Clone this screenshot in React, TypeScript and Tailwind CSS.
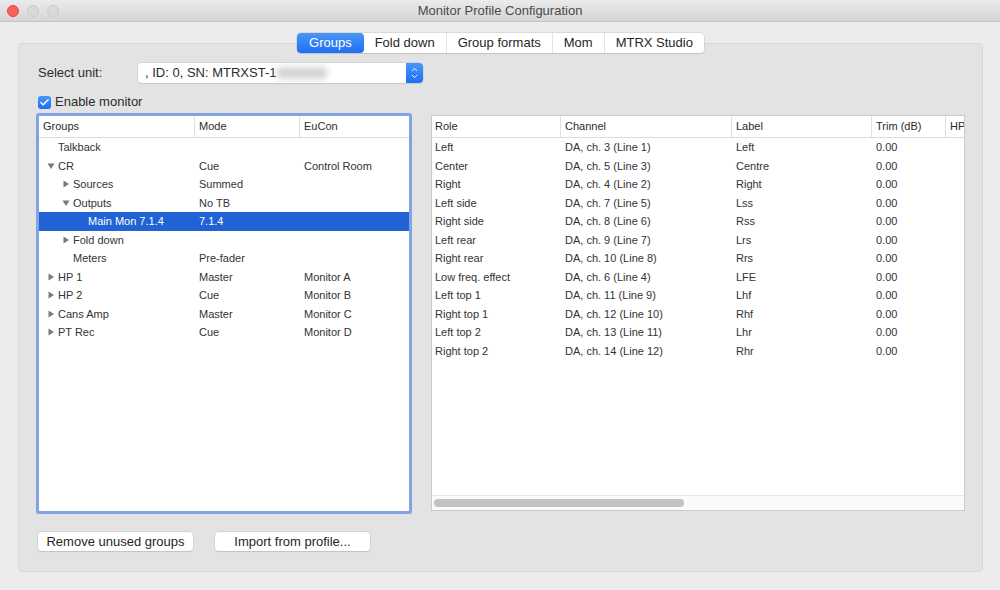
import { Check, ChevronUp, ChevronDown } from "lucide-react";

type TreeRow = {
  name: string;
  mode?: string;
  eucon?: string;
  depth: number;
  arrow?: "open" | "closed";
  selected?: boolean;
};

const treeRows: TreeRow[] = [
  { name: "Talkback", depth: 0 },
  { name: "CR", mode: "Cue", eucon: "Control Room", depth: 0, arrow: "open" },
  { name: "Sources", mode: "Summed", depth: 1, arrow: "closed" },
  { name: "Outputs", mode: "No TB", depth: 1, arrow: "open" },
  { name: "Main Mon 7.1.4", mode: "7.1.4", depth: 2, selected: true },
  { name: "Fold down", depth: 1, arrow: "closed" },
  { name: "Meters", mode: "Pre-fader", depth: 1 },
  { name: "HP 1", mode: "Master", eucon: "Monitor A", depth: 0, arrow: "closed" },
  { name: "HP 2", mode: "Cue", eucon: "Monitor B", depth: 0, arrow: "closed" },
  { name: "Cans Amp", mode: "Master", eucon: "Monitor C", depth: 0, arrow: "closed" },
  { name: "PT Rec", mode: "Cue", eucon: "Monitor D", depth: 0, arrow: "closed" },
];

const channels = [
  ["Left", "DA, ch. 3 (Line 1)", "Left"],
  ["Center", "DA, ch. 5 (Line 3)", "Centre"],
  ["Right", "DA, ch. 4 (Line 2)", "Right"],
  ["Left side", "DA, ch. 7 (Line 5)", "Lss"],
  ["Right side", "DA, ch. 8 (Line 6)", "Rss"],
  ["Left rear", "DA, ch. 9 (Line 7)", "Lrs"],
  ["Right rear", "DA, ch. 10 (Line 8)", "Rrs"],
  ["Low freq. effect", "DA, ch. 6 (Line 4)", "LFE"],
  ["Left top 1", "DA, ch. 11 (Line 9)", "Lhf"],
  ["Right top 1", "DA, ch. 12 (Line 10)", "Rhf"],
  ["Left top 2", "DA, ch. 13 (Line 11)", "Lhr"],
  ["Right top 2", "DA, ch. 14 (Line 12)", "Rhr"],
];

const tabs = ["Groups", "Fold down", "Group formats", "Mom", "MTRX Studio"];

function Arrow({ dir }: { dir: "open" | "closed" }) {
  return (
    <svg width="8" height="8" viewBox="0 0 8 8" className="shrink-0">
      {dir === "open" ? (
        <path d="M0.5 1.5 L7.5 1.5 L4 7 Z" fill="#7a7a7a" />
      ) : (
        <path d="M1.5 0.5 L7 4 L1.5 7.5 Z" fill="#7a7a7a" />
      )}
    </svg>
  );
}

export default function App() {
  return (
    <div
      className="w-[1000px] h-[590px] bg-[#ececec] overflow-hidden text-[#2b2b2b]"
      style={{ fontFamily: '"Liberation Sans", Arial, sans-serif' }}
    >
      {/* title bar */}
      <div className="h-[22px] bg-gradient-to-b from-[#ebebeb] to-[#d5d5d5] border-b border-[#c4c4c4] flex items-center relative">
        <div className="flex gap-[8px] pl-[7px]">
          <div className="w-[12px] h-[12px] rounded-full bg-[#fc605c] border border-[#e0443e]" />
          <div className="w-[12px] h-[12px] rounded-full bg-[#d9d9d9] border border-[#cbcbcb]" />
          <div className="w-[12px] h-[12px] rounded-full bg-[#d9d9d9] border border-[#cbcbcb]" />
        </div>
        <div className="absolute inset-0 flex items-center justify-center text-[13px] text-[#4a4a4a]">
          Monitor Profile Configuration
        </div>
      </div>

      {/* tabs */}
      <div className="flex justify-center pt-[11px] relative z-10">
        <div className="flex h-[20px] rounded-[4px] bg-white shadow-[0_0_0_0.5px_#c8c8c8,0_1px_1px_rgba(0,0,0,0.15)] text-[13px] ml-[1px]">
          {tabs.map((t, i) => (
            <div
              key={t}
              className={
                i === 0
                  ? "px-[12px] flex items-center rounded-[4px] text-white bg-gradient-to-b from-[#4a95f8] to-[#1b6ff3]"
                  : i === 1
                  ? "px-[11px] flex items-center text-[#262626]"
                  : "px-[11px] flex items-center border-l border-[#e2e2e2] text-[#262626]"
              }
            >
              {t}
            </div>
          ))}
        </div>
      </div>

      {/* group box */}
      <div className="ml-[18px] -mt-[10px] w-[965px] h-[529px] bg-[#e3e3e3] border border-[#d8d8d8] rounded-[4px] px-[17px]">
        {/* select unit row */}
        <div className="flex items-center mt-[19px] h-[20px] text-[13px]">
          <div className="w-[102px] pl-[2px]">Select unit:</div>
          <div className="w-[285px] h-[20px] bg-white rounded-[4px] shadow-[0_0_0_0.5px_#c8c8c8,0_1px_1px_rgba(0,0,0,0.12)] flex items-center justify-between">
            <div className="pl-[7px] flex items-center">
              , ID: 0, SN: MTRXST-1
              <span className="inline-block w-[50px] h-[12px] ml-[1px] bg-[#d4d4d4] blur-[3px] rounded" />
            </div>
            <div className="w-[17px] h-[20px] rounded-r-[4px] bg-gradient-to-b from-[#4a95f8] to-[#1b6ff3] flex flex-col items-center justify-center">
              <ChevronUp size={9} strokeWidth={2.5} color="white" className="-mb-[2px]" />
              <ChevronDown size={9} strokeWidth={2.5} color="white" />
            </div>
          </div>
        </div>

        {/* enable monitor */}
        <div className="flex items-center mt-[12px] h-[14px] text-[13px] pl-[2px]">
          <div className="w-[13px] h-[13px] rounded-[3px] bg-gradient-to-b from-[#4a95f8] to-[#1b6ff3] flex items-center justify-center">
            <Check size={11} strokeWidth={3} color="white" />
          </div>
          <span className="ml-[4px]">Enable monitor</span>
        </div>

        {/* panels */}
        <div className="flex mt-[4px] text-[11px]">
          {/* tree */}
          <div className="w-[376px] h-[401px] border-[3px] border-[#7fa3e4] rounded-[3px] bg-white flex flex-col">
            <div className="flex h-[22px] shrink-0 border-b border-[#dcdcdc] text-[#2b2b2b]">
              <div className="w-[156px] pl-[4px] flex items-center border-r border-[#e0e0e0]">Groups</div>
              <div className="w-[105px] pl-[4px] flex items-center border-r border-[#e0e0e0]">Mode</div>
              <div className="flex-1 pl-[4px] flex items-center">EuCon</div>
            </div>
            {treeRows.map((r) => (
              <div
                key={r.name}
                className={`flex h-[18.5px] shrink-0 items-center ${r.selected ? "bg-[#2162d4] text-white" : "text-[#333333]"}`}
              >
                <div
                  className="w-[156px] flex items-center"
                  style={{ paddingLeft: 8 + r.depth * 15 }}
                >
                  <div className="w-[11px] flex items-center">
                    {r.arrow && <Arrow dir={r.arrow} />}
                  </div>
                  <span>{r.name}</span>
                </div>
                <div className="w-[105px] pl-[4px]">{r.mode}</div>
                <div className="flex-1 pl-[4px]">{r.eucon}</div>
              </div>
            ))}
          </div>

          {/* channel table */}
          <div className="ml-[19px] mt-[2px] w-[534px] h-[396px] border border-[#c9c9c9] bg-white flex flex-col">
            <div className="flex h-[22px] shrink-0 border-b border-[#dcdcdc] whitespace-nowrap overflow-hidden">
              <div className="w-[129px] shrink-0 pl-[3px] flex items-center border-r border-[#e0e0e0]">Role</div>
              <div className="w-[171px] shrink-0 pl-[4px] flex items-center border-r border-[#e0e0e0]">Channel</div>
              <div className="w-[140px] shrink-0 pl-[4px] flex items-center border-r border-[#e0e0e0]">Label</div>
              <div className="w-[74px] shrink-0 pl-[4px] flex items-center border-r border-[#e0e0e0]">Trim (dB)</div>
              <div className="w-[18px] shrink-0 pl-[4px] flex items-center overflow-hidden">HP</div>
            </div>
            <div className="flex-1 text-[#333333]">
              {channels.map(([role, ch, label]) => (
                <div key={role} className="flex h-[18.5px] items-center whitespace-nowrap">
                  <div className="w-[129px] shrink-0 pl-[3px]">{role}</div>
                  <div className="w-[171px] shrink-0 pl-[4px]">{ch}</div>
                  <div className="w-[140px] shrink-0 pl-[4px]">{label}</div>
                  <div className="w-[74px] shrink-0 pl-[4px]">0.00</div>
                </div>
              ))}
            </div>
            <div className="h-[15px] bg-[#fafafa] border-t border-[#e6e6e6] flex items-center px-[2px]">
              <div className="w-[250px] h-[8px] rounded-full bg-[#c2c2c2]" />
            </div>
          </div>
        </div>

        {/* buttons */}
        <div className="flex gap-[22px] mt-[18px] ml-[2px] text-[13px]">
          <button className="w-[155px] h-[19px] bg-white rounded-[4px] shadow-[0_0_0_0.5px_#c4c4c4,0_1px_1px_rgba(0,0,0,0.15)] text-[#262626]">
            Remove unused groups
          </button>
          <button className="w-[155px] h-[19px] bg-white rounded-[4px] shadow-[0_0_0_0.5px_#c4c4c4,0_1px_1px_rgba(0,0,0,0.15)] text-[#262626]">
            Import from profile...
          </button>
        </div>
      </div>
    </div>
  );
}
